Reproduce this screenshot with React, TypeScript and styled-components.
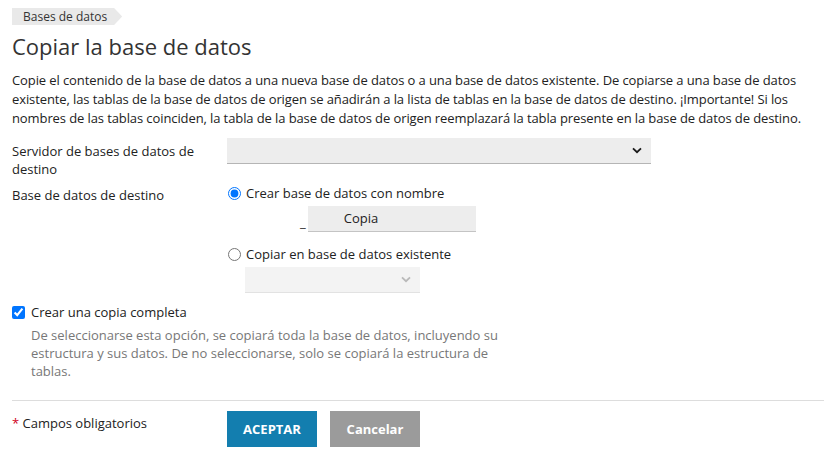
import React from 'react';
import styled, { createGlobalStyle } from 'styled-components';

const GlobalStyle = createGlobalStyle`
    html, body {
        margin: 0;
        padding: 0;
        background: #fff;
    }
    body {
        font-family: "Open Sans", "Liberation Sans", Arial, sans-serif;
        font-size: 13px;
        color: #222;
    }
`;

const Page = styled.div`
    padding: 7px 0 0 12px;
`;

const Breadcrumb = styled.div`
    display: inline-block;
    height: 17px;
    line-height: 17px;
    padding: 0 15px 0 11px;
    font-size: 12px;
    color: #333;
    background: #e9e9e9;
    clip-path: polygon(0 0, calc(100% - 8px) 0, 100% 50%, calc(100% - 8px) 100%, 0 100%);
`;

const Title = styled.h1`
    margin: 6px 0 0;
    font-size: 22px;
    font-weight: 400;
    line-height: 30px;
    color: #333;
`;

const Intro = styled.p`
    margin: 10px 0 0 0;
    line-height: 19px;
    letter-spacing: -0.1px;
`;

const Form = styled.div`
    margin-top: 10px;
    display: grid;
    grid-template-columns: 215px 1fr;
    row-gap: 4px;
`;

const Label = styled.div`
    line-height: 18px;
    padding-top: 4px;
    padding-right: 20px;
`;

const Field = styled.div`
    display: flex;
    flex-direction: column;
`;

const Select = styled.div<{ $width: number; $disabled?: boolean }>`
    position: relative;
    box-sizing: border-box;
    width: ${({ $width }) => $width}px;
    height: 26px;
    background: ${({ $disabled }) => ($disabled ? '#f3f3f3' : '#ededed')};
    border-bottom: 1px solid ${({ $disabled }) => ($disabled ? '#e2e2e2' : '#b5b5b5')};
    display: flex;
    align-items: center;
    justify-content: flex-end;
    padding-right: 9px;
`;

const Chevron = ({ color }: { color: string }) => (
    <svg width="10" height="7" viewBox="0 0 10 7">
        <path d="M1 1.3 L5 5.2 L9 1.3" fill="none" stroke={color} strokeWidth="1.8" />
    </svg>
);

const RadioRow = styled.label<{ $top?: number }>`
    display: flex;
    align-items: center;
    gap: 5px;
    height: 18px;
    margin-top: ${({ $top }) => $top ?? 2}px;
    margin-left: 1px;
    line-height: 18px;

    input {
        margin: 0;
        width: 13px;
        height: 13px;
    }
`;

const NameRow = styled.div`
    display: flex;
    align-items: flex-end;
    margin: 4px 0 0 73px;
    gap: 2px;
`;

const Prefix = styled.span`
    line-height: 18px;
    margin-bottom: 1px;
`;

const TextInput = styled.div`
    box-sizing: border-box;
    width: 168px;
    height: 26px;
    line-height: 25px;
    padding-left: 36px;
    background: #ededed;
    border-bottom: 1px solid #c4c4c4;
`;

const Indented = styled.div<{ $top: number }>`
    margin: ${({ $top }) => $top}px 0 0 18px;
`;

const CheckBlock = styled.div`
    margin-top: 10px;
`;

const CheckRow = styled.label`
    display: flex;
    align-items: center;
    gap: 6px;
    line-height: 18px;

    input {
        margin: 0;
        width: 13px;
        height: 13px;
    }
`;

const Hint = styled.div`
    margin: 5px 0 0 19px;
    width: 475px;
    color: #777;
    line-height: 18px;
`;

const Divider = styled.hr`
    margin: 20px 0 0;
    border: 0;
    border-top: 1px solid #ddd;
`;

const Footer = styled.div`
    display: grid;
    grid-template-columns: 215px 1fr;
    margin-top: 10px;
`;

const Required = styled.div`
    padding-top: 3px;
    line-height: 18px;

    span {
        color: #d0021b;
    }
`;

const Buttons = styled.div`
    display: flex;
    gap: 13px;
`;

const Button = styled.button<{ $primary?: boolean }>`
    width: 90px;
    height: 36px;
    border: 0;
    padding: 0;
    font-family: inherit;
    font-size: 13px;
    font-weight: 700;
    color: #fff;
    background: ${({ $primary }) => ($primary ? '#137eaf' : '#9b9b9b')};
    cursor: pointer;
`;

const App = () => {
    return (
        <Page>
            <GlobalStyle />
            <Breadcrumb>Bases de datos</Breadcrumb>
            <Title>Copiar la base de datos</Title>
            <Intro>
                Copie el contenido de la base de datos a una nueva base de datos o a una base de datos existente. De copiarse a una base de datos
                existente, las tablas de la base de datos de origen se añadirán a la lista de tablas en la base de datos de destino. ¡Importante! Si los
                nombres de las tablas coinciden, la tabla de la base de datos de origen reemplazará la tabla presente en la base de datos de destino.
            </Intro>
            <Form>
                <Label>Servidor de bases de datos de destino</Label>
                <Field>
                    <Select $width={424}>
                        <Chevron color="#1a1a1a" />
                    </Select>
                </Field>
                <Label>Base de datos de destino</Label>
                <Field>
                    <RadioRow>
                        <input type="radio" name="target" defaultChecked />
                        Crear base de datos con nombre
                    </RadioRow>
                    <NameRow>
                        <Prefix>_</Prefix>
                        <TextInput>Copia</TextInput>
                    </NameRow>
                    <RadioRow $top={13}>
                        <input type="radio" name="target" />
                        Copiar en base de datos existente
                    </RadioRow>
                    <Indented $top={4}>
                        <Select $width={175} $disabled>
                            <Chevron color="#b9b9b9" />
                        </Select>
                    </Indented>
                </Field>
            </Form>
            <CheckBlock>
                <CheckRow>
                    <input type="checkbox" defaultChecked />
                    Crear una copia completa
                </CheckRow>
                <Hint>
                    De seleccionarse esta opción, se copiará toda la base de datos, incluyendo su estructura y sus datos. De no seleccionarse, solo se copiará la estructura de tablas.
                </Hint>
            </CheckBlock>
            <Divider />
            <Footer>
                <Required>
                    <span>*</span> Campos obligatorios
                </Required>
                <Buttons>
                    <Button $primary>ACEPTAR</Button>
                    <Button>Cancelar</Button>
                </Buttons>
            </Footer>
        </Page>
    );
};

export default App;
